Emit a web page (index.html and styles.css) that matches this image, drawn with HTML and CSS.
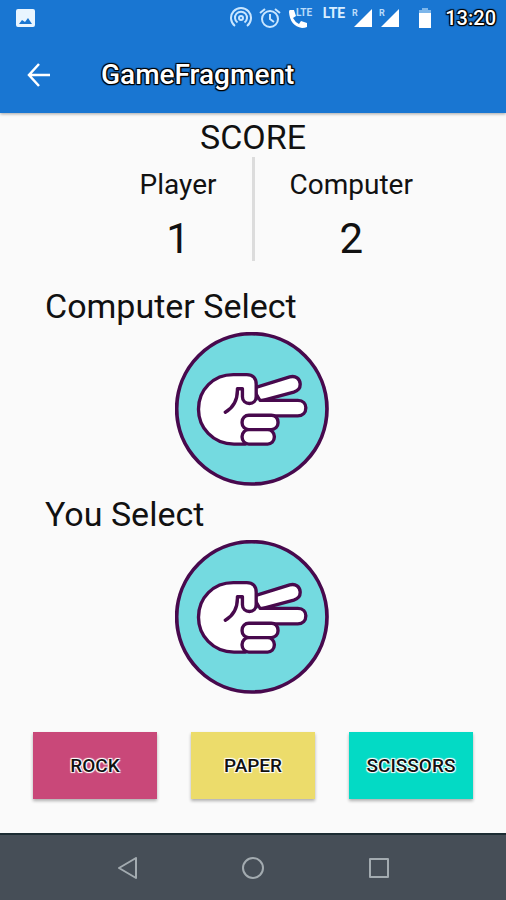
FILE: index.html
```html
<!DOCTYPE html>
<html lang="en">
<head>
    <meta charset="UTF-8">
    <meta name="viewport" content="width=device-width, initial-scale=1.0">
    <title>GameFragment</title>
    <link rel="stylesheet" href="styles.css">
</head>
<body>
    <svg class="defs" width="0" height="0" aria-hidden="true">
        <symbol id="scissors" viewBox="30 20 459 459">
            <circle cx="259" cy="249" r="224" fill="#74dae0" stroke="#48094d" stroke-width="11"/>
            <g fill="#fff" stroke="#48094d" stroke-width="10" stroke-linejoin="round" stroke-linecap="round">
                <path d="M262 188L372 154C390 149 402 160 403 174C404 187 397 195 384 199L284 226Z"/>
                <path d="M240 354H206C142 354 100 304 100 250C100 192 144 147 204 147H244C262 147 272 158 272 176V224L284 224H396C412 224 420 234 420 246C420 260 411 270 396 270H334L310 312V354Z" stroke="none"/>
                <path d="M240 354H206C142 354 100 304 100 250C100 192 144 147 204 147H244C262 147 272 158 272 176V212C272 225 263 233 252 233C240 233 231 225 231 213V189H216C217 220 208 243 180 259" fill="none"/>
                <path d="M284 224H396C412 224 420 234 420 246C420 260 411 270 396 270H320" fill="none"/>
                <rect x="230" y="268" width="107" height="43" rx="20"/>
                <rect x="230" y="311" width="96" height="43" rx="20"/>
            </g>
        </symbol>
    </svg>

    <header class="top">
        <div class="status-bar">
            <svg width="20" height="20" viewBox="0 0 20 20">
                <path fill="#e9f5ff" fill-rule="evenodd" d="M2 1H17Q19 1 19 3V17Q19 19 17 19H2Q0 19 0 17V3Q0 1 2 1ZM3 16H16L12 10L9 14L6 12Z"/>
            </svg>
            <div class="status-icons">
                <svg width="22" height="22" viewBox="0 0 22 22" fill="none" stroke="#c9e6ff" stroke-width="2">
                    <path d="M5 19A10 10 0 1 1 17 19"/>
                    <path d="M7.500 15.500A6 6 0 1 1 14.500 15.500"/>
                    <circle cx="11" cy="11" r="2"/>
                </svg>
                <svg width="22" height="22" viewBox="0 0 22 22" fill="none" stroke="#c9e6ff" stroke-width="2">
                    <circle cx="11" cy="12" r="8"/>
                    <path d="M11 7V12L15 15M1 6L6 2M16 2L21 6"/>
                </svg>
                <svg width="28" height="22" viewBox="0 0 28 22">
                    <path fill="#fff" d="M2 3H6L8 9L5 11Q7 15 11 17L13 14L19 16V20Q17 21 14 21Q2 19 1 5Q1 3 2 3Z"/>
                    <text x="8" y="9" font-size="10" font-weight="700" fill="#b9dcfa">LTE</text>
                </svg>
                <span class="lte">LTE</span>
                <svg width="20" height="20" viewBox="0 0 20 20">
                    <path d="M20 1V19H2Z" fill="#fff"/>
                    <text x="0" y="8" font-size="9" font-weight="700" fill="#b9dcfa">R</text>
                </svg>
                <svg width="20" height="20" viewBox="0 0 20 20">
                    <path d="M20 1V19H2Z" fill="#fff"/>
                    <text x="0" y="8" font-size="9" font-weight="700" fill="#b9dcfa">R</text>
                </svg>
                <svg class="battery" width="14" height="20" viewBox="0 0 14 20">
                    <path fill="#7db6ea" d="M4 0H10V2H13V6H1V2H4Z"/>
                    <path fill="#fff" d="M1 5H13V20H1Z"/>
                </svg>
                <time class="clock">13:20</time>
            </div>
        </div>
        <div class="app-bar">
            <button class="back" aria-label="Back">
                <svg width="24" height="24" viewBox="0 0 24 24" fill="none" stroke="#fff" stroke-width="2.500">
                    <path d="M23 12H2M12 1L2 12L12 23"/>
                </svg>
            </button>
            <h1>GameFragment</h1>
        </div>
    </header>

    <main>
        <h2 class="score-title">SCORE</h2>
        <div class="scores">
            <div class="score player">
                <span class="name">Player</span>
                <span class="points">1</span>
            </div>
            <div class="divider"></div>
            <div class="score computer">
                <span class="name">Computer</span>
                <span class="points">2</span>
            </div>
        </div>

        <section class="pick">
            <h2>Computer Select</h2>
            <svg class="hand" role="img" aria-label="Scissors"><use href="#scissors"/></svg>
        </section>
        <section class="pick">
            <h2>You Select</h2>
            <svg class="hand" role="img" aria-label="Scissors"><use href="#scissors"/></svg>
        </section>

        <div class="choices">
            <button class="choice rock">ROCK</button>
            <button class="choice paper">PAPER</button>
            <button class="choice scissors">SCISSORS</button>
        </div>
    </main>

    <nav class="nav-bar">
        <button aria-label="Back">
            <svg width="22" height="22" viewBox="0 0 22 22"><path d="M20 1V21L3 11Z"/></svg>
        </button>
        <button aria-label="Home">
            <svg width="22" height="22" viewBox="0 0 22 22"><circle cx="11" cy="11" r="10"/></svg>
        </button>
        <button aria-label="Recent apps">
            <svg width="22" height="22" viewBox="0 0 22 22"><rect x="2" y="2" width="18" height="18"/></svg>
        </button>
    </nav>
</body>
</html>
```
FILE: styles.css
```css
* {
    box-sizing: border-box;
}
body {
    margin: 0;
    min-height: 100vh;
    display: flex;
    flex-direction: column;
    background-color: #fafafa;
    color: #111;
    font-family: Roboto, sans-serif;
}
h1, h2 {
    margin: 0;
    font-weight: 400;
}
h2 {
    font-size: 34px;
    line-height: 40px;
}
button {
    padding: 0;
    border: none;
    background: none;
    font-family: inherit;
    cursor: pointer;
}
svg {
    display: block;
}
.defs {
    position: absolute;
}

/* status bar and app bar */
.top {
    background-color: #1976d2;
    color: #fff;
    box-shadow: 0 1px 3px rgba(0,0,0,0.35);
}
.status-bar {
    display: flex;
    align-items: center;
    justify-content: space-between;
    height: 36px;
    padding: 0 10px 0 16px;
}
.status-icons {
    display: flex;
    align-items: center;
    gap: 7px;
}
.lte {
    align-self: flex-start;
    color: #d9eeff;
    font-size: 14px;
    font-weight: 700;
    line-height: 14px;
}
.battery {
    margin: 0 6px 0 12px;
}
.clock {
    font-size: 20px;
    font-weight: 500;
}
.clock, h1 {
    text-shadow: 1px 1px 1px #000, -1px -1px 1px #000, 1px -1px 1px #000, -1px 1px 1px #000, 0 1px 1px #000, 1px 0 1px #000;
}
.app-bar {
    display: flex;
    align-items: center;
    gap: 50px;
    height: 77px;
    padding: 0 27px;
}
h1 {
    font-size: 28px;
    font-weight: 500;
    line-height: 32px;
}

main {
    flex: 1;
    display: flex;
    flex-direction: column;
    padding-top: 4px;
}
.score-title {
    text-align: center;
}
.scores {
    display: grid;
    grid-template-columns: 1fr 3px 1fr;
    margin-bottom: 25px;
}
.score {
    display: flex;
    flex-direction: column;
    align-items: center;
    height: 104px;
    padding: 11px 35px 0;
}
.player {
    justify-self: end;
}
.computer {
    justify-self: start;
}
.name {
    font-size: 28px;
    line-height: 34px;
}
.points {
    font-size: 42px;
    line-height: 58px;
    padding-top: 8px;
}
.divider {
    background-color: #dcdcdc;
}
.pick {
    margin-bottom: 8px;
    padding-right: 3px;
}
.pick h2 {
    padding-left: 45px;
    margin-bottom: 6px;
}
.hand {
    width: 154px;
    height: 154px;
    margin: 0 auto;
}
.choices {
    display: grid;
    grid-template-columns: repeat(3, 1fr);
    gap: 34px;
    margin-top: auto;
    padding: 29px 33px 34px;
}
.choice {
    height: 67px;
    color: #111;
    font-size: 19px;
    font-weight: 500;
    text-shadow: 1px 1px 1px #fff, -1px -1px 1px #fff, 1px -1px 1px #fff, -1px 1px 1px #fff;
    box-shadow: 0 2px 3px rgba(0,0,0,0.3);
}
.rock {
    background-color: #c94879;
}
.paper {
    background-color: #ecdc6b;
}
.scissors {
    background-color: #03dac5;
}

.nav-bar {
    display: flex;
    justify-content: center;
    gap: 104px;
    height: 67px;
    border-top: 2px solid #1c2c33;
    background-color: #464e57;
}
.nav-bar svg {
    fill: none;
    stroke: #a3abb0;
    stroke-width: 2;
    stroke-linejoin: round;
}
```
